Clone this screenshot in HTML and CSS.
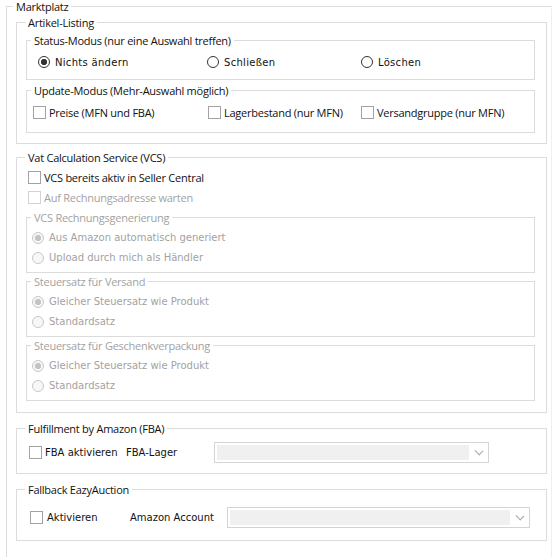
FILE: index.html
```html
<!DOCTYPE html>
<html lang="de">
<head>
<meta charset="utf-8">
<title>Marktplatz</title>
<link rel="stylesheet" href="styles.css">
</head>
<body>
<fieldset class="gb gb0">
  <legend>Marktplatz</legend>
  <div class="body0">

    <fieldset class="gb gb1">
      <legend>Artikel-Listing</legend>
      <div class="artikel-body">
        <fieldset class="gb gb2">
          <legend>Status-Modus (nur eine Auswahl treffen)</legend>
          <div class="row status-row">
            <label class="opt w169"><span class="rb on"></span><span class="t">Nichts ändern</span></label>
            <label class="opt w154"><span class="rb"></span><span class="t">Schließen</span></label>
            <label class="opt"><span class="rb"></span><span class="t">Löschen</span></label>
          </div>
        </fieldset>
        <fieldset class="gb gb2 update">
          <legend>Update-Modus (Mehr-Auswahl möglich)</legend>
          <div class="row update-row">
            <label class="opt ck-opt w175"><span class="cb"></span><span>Preise (MFN und FBA)</span></label>
            <label class="opt ck-opt w153"><span class="cb"></span><span>Lagerbestand (nur MFN)</span></label>
            <label class="opt ck-opt"><span class="cb"></span><span>Versandgruppe (nur MFN)</span></label>
          </div>
        </fieldset>
      </div>
    </fieldset>

    <fieldset class="gb gb1 vcs">
      <legend>Vat Calculation Service (VCS)</legend>
      <div class="vcs-body">
        <label class="opt ck-opt vrow"><span class="cb"></span><span>VCS bereits aktiv in Seller Central</span></label>
        <label class="opt ck-opt vrow dis"><span class="cb"></span><span>Auf Rechnungsadresse warten</span></label>

        <fieldset class="gb gb2 sub dis first">
          <legend>VCS Rechnungsgenerierung</legend>
          <div class="radios">
            <label class="opt"><span class="rb on"></span><span class="t">Aus Amazon automatisch generiert</span></label>
            <label class="opt"><span class="rb"></span><span class="t">Upload durch mich als Händler</span></label>
          </div>
        </fieldset>
        <fieldset class="gb gb2 sub dis">
          <legend>Steuersatz für Versand</legend>
          <div class="radios">
            <label class="opt"><span class="rb on"></span><span class="t">Gleicher Steuersatz wie Produkt</span></label>
            <label class="opt"><span class="rb"></span><span class="t">Standardsatz</span></label>
          </div>
        </fieldset>
        <fieldset class="gb gb2 sub dis">
          <legend>Steuersatz für Geschenkverpackung</legend>
          <div class="radios">
            <label class="opt"><span class="rb on"></span><span class="t">Gleicher Steuersatz wie Produkt</span></label>
            <label class="opt"><span class="rb"></span><span class="t">Standardsatz</span></label>
          </div>
        </fieldset>
      </div>
    </fieldset>

    <fieldset class="gb gb1 fba">
      <legend>Fulfillment by Amazon (FBA)</legend>
      <div class="row fba-row">
        <label class="opt ck-opt w97"><span class="cb"></span><span class="t">FBA aktivieren</span></label>
        <span class="t w88">FBA-Lager</span>
        <div class="combo w275"><span class="field"></span><span class="arrow"></span></div>
      </div>
    </fieldset>

    <fieldset class="gb gb1 fallback">
      <legend>Fallback EazyAuction</legend>
      <div class="row fb-row">
        <label class="opt ck-opt ck4 w100"><span class="cb"></span><span class="t">Aktivieren</span></label>
        <span class="t w97">Amazon Account</span>
        <div class="combo w303"><span class="field"></span><span class="arrow"></span></div>
      </div>
    </fieldset>

  </div>
</fieldset>
</body>
</html>
```

FILE: styles.css
```css
html, body {
  margin: 0;
  background: #ffffff;
}
body {
  font-family: "Open Sans", "Noto Sans", sans-serif;
  font-size: 11px;
  letter-spacing: -0.25px;
  color: #111111;
  overflow: hidden;
}

.gb {
  margin: 0;
  padding: 0;
  border: 1px solid #dcdcdc;
  min-width: 0;
  box-sizing: border-box;
}
.gb > legend {
  padding: 0 3px;
  height: 13px;
  line-height: 13px;
  font-size: 11px;
  white-space: nowrap;
}

.gb0 {
  margin-left: 6px;
  width: 546px;
  border-right-color: #efefef;
}
.gb0 > legend { margin-left: 6px; }
.gb1 > legend { margin-left: 8px; }
.gb2 > legend { margin-left: 4px; }

.body0 {
  padding: 3px 4px 40px 9px;
}

.artikel-body {
  padding: 5px 11px 10px 9px;
}

.row {
  display: flex;
  align-items: center;
}
.status-row { padding: 8px 0 10px 11px; height: 14px; }
.update { margin-top: 4px; }
.update-row { padding: 8px 0 13px 6px; height: 14px; }

.opt {
  display: flex;
  align-items: center;
  gap: 5px;
  white-space: nowrap;
}
.ck-opt { gap: 3px; }
.ck4 { gap: 4px; }

.w169 { width: 169px; }
.w154 { width: 154px; }
.w175 { width: 175px; }
.w153 { width: 153px; }
.w97 { width: 97px; flex: none; }
.w88 { width: 88px; flex: none; }
.w100 { width: 100px; flex: none; }
.w275 { width: 275px; flex: none; }
.w303 { width: 303px; flex: none; }

.t {
  font-family: "DejaVu Sans", "Liberation Sans", sans-serif;
  font-size: 10px;
  letter-spacing: 0;
  color: #111111;
}
.w169 .t, .w154 .t, .status-row .t { letter-spacing: 0.3px; }

/* radio button */
.rb {
  flex: none;
  width: 12px;
  height: 12px;
  border: 1px solid #333333;
  border-radius: 50%;
  box-sizing: border-box;
  background: #ffffff;
}
.rb.on {
  background: radial-gradient(circle, #333333 0 2.8px, #ffffff 3.4px);
}
.dis .rb {
  border-color: #c9c9c9;
  background: #f7f7f7;
}
.dis .rb.on {
  background: radial-gradient(circle, #c4c4c4 0 2.8px, #f7f7f7 3.4px);
}

/* checkbox */
.cb {
  flex: none;
  width: 13px;
  height: 13px;
  border: 1px solid #a3a3a3;
  box-sizing: border-box;
  background: #ffffff;
}
.dis .cb { border-color: #d2d2d2; }

.dis, .dis .t, .dis > legend { color: #a2a2a2; }

/* VCS */
.vcs { margin-top: 7px; }
.vcs-body {
  padding: 6px 11px 11px 9px;
}
.vrow {
  height: 14px;
  margin-left: 2px;
}
.vrow + .vrow { margin-top: 6px; }
.sub { margin-top: 2px; }
.sub.first { margin-top: 7px; }
.radios {
  display: flex;
  flex-direction: column;
  gap: 7px;
  padding: 7px 0 8px 5px;
}
.radios .opt { height: 13px; }

/* FBA */
.fba { margin-top: 9px; }
.fba-row { padding: 7px 0 10px 12px; }
.fallback { margin-top: 9px; }
.fb-row { padding: 11px 0 12px 13px; }

/* combo box */
.combo {
  height: 21px;
  border: 1px solid #d4d4d4;
  box-sizing: border-box;
  display: flex;
  align-items: stretch;
  padding: 2px 0 2px 2px;
  background: #ffffff;
}
.combo .field {
  flex: 1;
  background: #f0f0f0;
}
.combo .arrow {
  flex: none;
  width: 19px;
  display: flex;
  align-items: center;
  justify-content: center;
}
.combo .arrow::before {
  content: "";
  width: 5px;
  height: 5px;
  border-right: 1px solid #a8a8a8;
  border-bottom: 1px solid #a8a8a8;
  transform: translateY(-2px) rotate(45deg) scaleX(1.1);
}
```
